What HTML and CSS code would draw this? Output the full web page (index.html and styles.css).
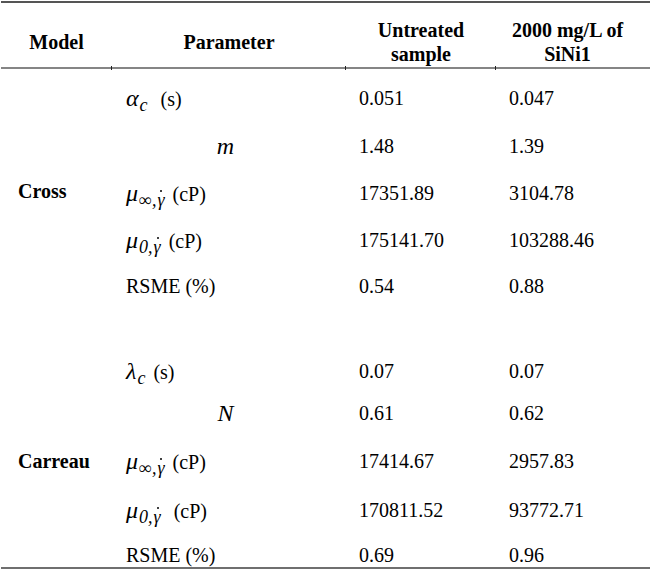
FILE: index.html
```html
<!DOCTYPE html>
<html lang="en">
<head>
<meta charset="utf-8">
<title>Cross and Carreau model parameters</title>
<link rel="stylesheet" href="styles.css">
</head>
<body>
<table class="data">
  <colgroup>
    <col class="c-model">
    <col class="c-param">
    <col class="c-untreated">
    <col class="c-sini">
  </colgroup>
  <thead>
    <tr>
      <th class="h-model">Model</th>
      <th class="h-param">Parameter</th>
      <th class="h-val">Untreated<br>sample</th>
      <th class="h-val">2000 mg/L of<br>SiNi1</th>
    </tr>
  </thead>
  <tbody>
    <tr class="r1">
      <td></td>
      <td class="param"><span class="math">α<sub>c</sub></span>&nbsp; (s)</td>
      <td class="val">0.051</td>
      <td class="val">0.047</td>
    </tr>
    <tr class="r2">
      <td></td>
      <td class="param center"><span class="math">m</span></td>
      <td class="val">1.48</td>
      <td class="val">1.39</td>
    </tr>
    <tr class="r3">
      <td class="model">Cross</td>
      <td class="param"><span class="math">μ<sub>∞,<span class="gdot">γ</span></sub></span> (cP)</td>
      <td class="val">17351.89</td>
      <td class="val">3104.78</td>
    </tr>
    <tr class="r4">
      <td></td>
      <td class="param"><span class="math">μ<sub>0,<span class="gdot">γ</span></sub></span> (cP)</td>
      <td class="val">175141.70</td>
      <td class="val">103288.46</td>
    </tr>
    <tr class="r5">
      <td></td>
      <td class="param">RSME (%)</td>
      <td class="val">0.54</td>
      <td class="val">0.88</td>
    </tr>
    <tr class="spacer">
      <td></td><td></td><td></td><td></td>
    </tr>
    <tr class="r6">
      <td></td>
      <td class="param"><span class="math">λ<sub>c</sub></span> (s)</td>
      <td class="val">0.07</td>
      <td class="val">0.07</td>
    </tr>
    <tr class="r7">
      <td></td>
      <td class="param center"><span class="math">N</span></td>
      <td class="val">0.61</td>
      <td class="val">0.62</td>
    </tr>
    <tr class="r8">
      <td class="model">Carreau</td>
      <td class="param"><span class="math">μ<sub>∞,<span class="gdot">γ</span></sub></span> (cP)</td>
      <td class="val">17414.67</td>
      <td class="val">2957.83</td>
    </tr>
    <tr class="r9">
      <td></td>
      <td class="param"><span class="math">μ<sub>0,<span class="gdot">γ</span></sub></span>&nbsp; (cP)</td>
      <td class="val">170811.52</td>
      <td class="val">93772.71</td>
    </tr>
    <tr class="r10">
      <td></td>
      <td class="param">RSME (%)</td>
      <td class="val">0.69</td>
      <td class="val">0.96</td>
    </tr>
  </tbody>
</table>
</body>
</html>
```
FILE: styles.css
```css
html, body {
  margin: 0;
  padding: 0;
  background: #ffffff;
  overflow: hidden;
}

body {
  padding-top: 1px;
  padding-left: 1px;
  font-family: "Liberation Serif", "Times New Roman", serif;
  color: #000000;
}

.data {
  border-collapse: collapse;
  table-layout: fixed;
  width: 680px;
  font-family: "Liberation Serif", "Times New Roman", serif;
  font-size: 20px;
  border-top: 2px solid #555555;
  border-bottom: 2px solid #6f6f6f;
}

.c-model { width: 111px; }
.c-param { width: 234px; }
.c-untreated { width: 150px; }
.c-sini { width: 185px; }

th, td {
  padding: 0;
  vertical-align: top;
  line-height: 20px;
}

thead th {
  position: relative;
  height: 50px;
  padding-top: 14px;
  vertical-align: middle;
  text-align: center;
  font-weight: bold;
  font-size: 20px;
  line-height: 24px;
  border-bottom: 2px solid #858585;
}

thead th.h-val:nth-child(4) {
  padding-right: 42px;
}

thead th + th::before {
  content: "";
  position: absolute;
  left: -1px;
  bottom: -3px;
  width: 1px;
  height: 4px;
  background: #222222;
}

.param { padding-left: 14px; }
.param.center { text-align: center; padding-left: 0; padding-right: 4px; }
.val { padding-left: 13px; }
.model {
  padding-left: 17px;
  font-weight: bold;
}
.r3 .model { position: relative; top: -2px; }

.math {
  font-style: italic;
  font-size: 24px;
  margin-right: 3px;
}
.math sub {
  font-size: 18px;
  vertical-align: -5px;
  line-height: 0;
  margin-left: 1px;
}

.gdot {
  position: relative;
  display: inline-block;
  margin-left: 1px;
}
.gdot::after {
  content: "";
  position: absolute;
  left: 3px;
  top: -10px;
  width: 2px;
  height: 2px;
  border-radius: 50%;
  background: #000000;
}

tbody td { padding-top: 2px; }
.r1 td { height: 46px; padding-top: 19px; }
.r2 td { height: 45px; }
.r3 td { height: 45px; }
.r4 td { height: 44px; }
.r5 td { height: 44px; }
.spacer td { height: 39px; padding-top: 0; }
.r6 td { height: 40px; }
.r7 td { height: 46px; }
.r8 td { height: 47px; }
.r9 td { height: 43px; }
.r10 td { height: 22px; }
```
